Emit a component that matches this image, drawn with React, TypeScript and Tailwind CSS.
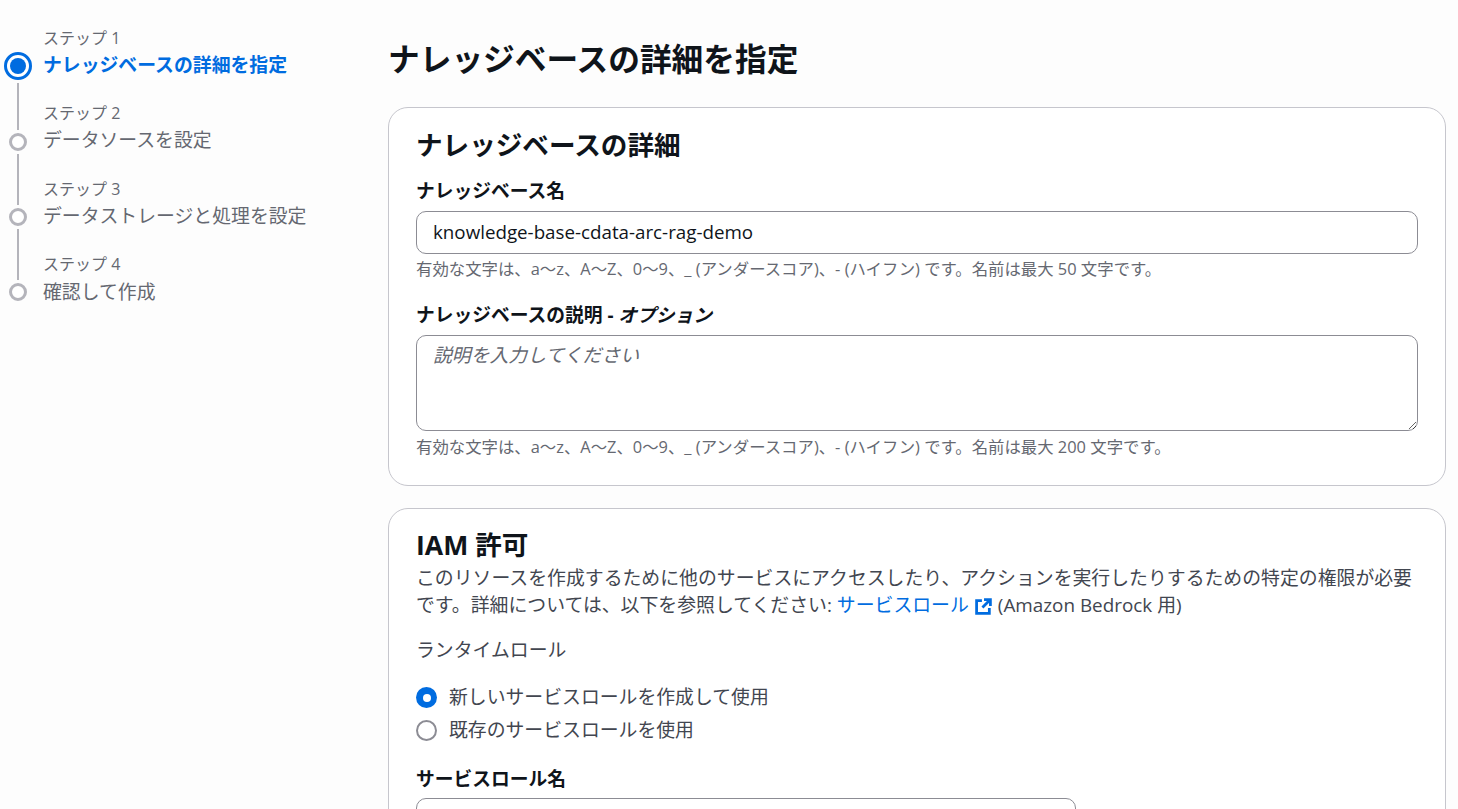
const font = { fontFamily: '"Open Sans", "Noto Sans CJK JP", sans-serif' };

const steps = [
  { label: 'ステップ 1', name: 'ナレッジベースの詳細を指定', active: true, height: 'h-[54px]', nameGap: 'mb-[2px]', labelGap: 'mb-[2px]' },
  { label: 'ステップ 2', name: 'データソースを設定', height: 'h-[71px]', nameGap: 'mb-[-2px]', labelGap: 'mb-[2px]' },
  { label: 'ステップ 3', name: 'データストレージと処理を設定', height: 'h-[75px]', nameGap: 'mb-[-3px]', labelGap: 'mb-[2px]' },
  { label: 'ステップ 4', name: '確認して作成', height: 'h-[75px]', nameGap: 'mb-[-4px]', labelGap: 'mb-[3px]' },
];

function Steps() {
  return (
    <nav className="w-[388px] shrink-0 pt-[26px]">
      {steps.map((step) => (
        <div key={step.label} className={`flex ${step.height}`}>
          <div className="flex w-[36px] shrink-0 flex-col items-center justify-end">
            {step.active ? (
              <div className="flex h-[28px] w-[28px] items-center justify-center rounded-full border-[3px] border-[#006ce0] bg-white">
                <div className="h-[16px] w-[16px] rounded-full bg-[#006ce0]" />
              </div>
            ) : (
              <>
                <div className="mt-[3px] w-[2px] flex-1 bg-[#b4b4bb]" />
                <div className="mt-[3px] h-[18px] w-[18px] rounded-full border-[3px] border-[#b4b4bb] bg-white" />
              </>
            )}
          </div>
          <div className="ml-[7px] flex min-w-0 flex-col justify-end">
            <div className={`${step.labelGap} h-[24px] text-[16px] leading-[24px] text-[#656871]`}>{step.label}</div>
            <div className={`${step.nameGap} text-[18.85px] leading-[26px] ${step.active ? 'font-bold text-[#006ce0]' : 'text-[#656871]'}`}>{step.name}</div>
          </div>
        </div>
      ))}
    </nav>
  );
}

function ExternalIcon() {
  return (
    <svg viewBox="0 0 16 16" className="mx-[6px] inline-block h-[17px] w-[17px] align-[-3px]" fill="none" stroke="#006ce0" strokeWidth="2.6">
      <path d="M6.5 2.5H1.5v12h12V9.5" />
      <path d="M8.5 1.5h6v6M14.5 1.5 7 9" />
    </svg>
  );
}

function Radio({ checked, children }: { checked?: boolean; children: string }) {
  return (
    <div className="flex h-[33px] items-center gap-[12px]">
      {checked ? (
        <div className="flex h-[21px] w-[21px] items-center justify-center rounded-full bg-[#006ce0]">
          <div className="h-[8px] w-[8px] rounded-full bg-white" />
        </div>
      ) : (
        <div className="h-[21px] w-[21px] rounded-full border-2 border-[#8c8c94] bg-white" />
      )}
      <span className="text-[18.85px] text-[#424650]">{children}</span>
    </div>
  );
}

export default function App() {
  return (
    <div className="flex h-[809px] w-full overflow-hidden bg-[#fdfdfd]" style={font}>
      <Steps />
      <main className="w-[1058px] shrink-0">
        <h1 className="mt-[38px] text-[31.7px] font-bold leading-[42px] text-[#0f141a]">ナレッジベースの詳細を指定</h1>
        <section className="mt-[27px] h-[379px] rounded-[20px] border border-[#c6c6cd] bg-white px-[27px] pt-[20px]">
          <h2 className="text-[26.6px] font-bold leading-[34px] text-[#0f141a]">ナレッジベースの詳細</h2>
          <label className="mt-[16px] block text-[18.75px] font-bold leading-[26px] text-[#0f141a]">ナレッジベース名</label>
          <input readOnly value="knowledge-base-cdata-arc-rag-demo" className="mt-[7px] block h-[43px] w-full rounded-[10px] border border-[#8c8c94] bg-white px-[16px] pb-[2px] text-[18.75px] text-[#0f141a] outline-none" />
          <p className="mt-[4px] text-[16.4px] leading-[22px] text-[#656871]">有効な文字は、a～z、A～Z、0～9、_ (アンダースコア)、- (ハイフン) です。名前は最大 50 文字です。</p>
          <label className="mt-[22px] block text-[18.75px] font-bold leading-[26px] text-[#0f141a]">
            ナレッジベースの説明 - <i>オプション</i>
          </label>
          <textarea readOnly placeholder="説明を入力してください" className="mt-[7px] block h-[96px] w-full rounded-[10px] border border-[#8c8c94] bg-white px-[16px] py-[6px] text-[18.85px] italic leading-[26px] text-[#0f141a] outline-none placeholder:text-[#656871]" />
          <p className="mt-[5px] text-[16.4px] leading-[22px] text-[#656871]">有効な文字は、a～z、A～Z、0～9、_ (アンダースコア)、- (ハイフン) です。名前は最大 200 文字です。</p>
        </section>
        <section className="mt-[22px] rounded-t-[20px] border border-[#c6c6cd] bg-white px-[27px] pt-[19px]">
          <h2 className="mb-[3px] text-[26.6px] font-bold leading-[34px] text-[#0f141a]">IAM 許可</h2>
          <p className="text-[18.88px] leading-[27px] text-[#424650]">
            このリソースを作成するために他のサービスにアクセスしたり、アクションを実行したりするための特定の権限が必要です。詳細については、以下を参照してください: <span className="text-[#006ce0]">サービスロール</span>
            <ExternalIcon />(Amazon Bedrock 用)
          </p>
          <div className="mt-[18px] text-[18.85px] leading-[26px] text-[#424650]">ランタイムロール</div>
          <div className="mt-[18px]">
            <Radio checked>新しいサービスロールを作成して使用</Radio>
            <Radio>既存のサービスロールを使用</Radio>
          </div>
          <label className="mt-[19px] block text-[18.75px] font-bold leading-[26px] text-[#0f141a]">サービスロール名</label>
          <input readOnly className="mt-[6px] block h-[43px] w-[660px] rounded-[10px] border border-[#8c8c94] bg-white" />
          <div className="h-[40px]" />
        </section>
      </main>
    </div>
  );
}
